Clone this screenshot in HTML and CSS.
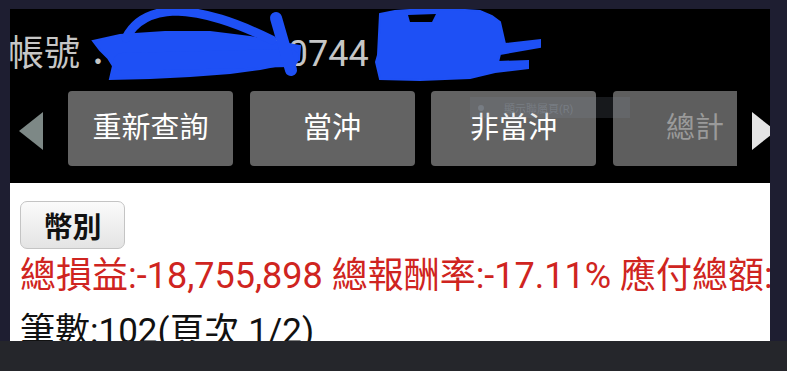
FILE: index.html
```html
<!DOCTYPE html>
<html lang="zh-Hant">
<head>
    <meta charset="UTF-8">
    <meta name="viewport" content="width=device-width, initial-scale=1.0">
    <title>帳號查詢</title>
    <link rel="stylesheet" href="styles.css">
</head>
<body>
    <div class="frame">
        <div class="screen">
            <div class="header">
                <div class="account">帳號：98-0012300744 王大明</div>

                <!-- hand scribbles hiding the account number -->
                <svg class="scribble" width="760" height="90" viewBox="10 9 760 90">
                    <polygon points="93,41 120,35 165,32 210,32 250,37 300,46 299,60 285,64 260,69 230,73 190,76 150,78 110,79 113,66 108,58 100,50" />
                    <path d="M122 62 L290 58" fill="none" stroke-width="18" stroke-linecap="round" />
                    <path d="M126 38 C134 22 150 12 175 11 C205 12 235 22 272 40" fill="none" stroke-width="9" stroke-linecap="round" />
                    <path d="M276 18 L291 70" fill="none" stroke-width="12" stroke-linecap="round" />
                    <polygon points="380,14 395,11 410,10 450,9 480,11 492,16 500,22 505,44 540,40 540,47 500,54 498,62 528,61 528,68 495,72 470,78 420,80 380,79 376,62 378,55" />
                    <polygon class="hole" points="408,15 436,14 432,22 410,22" />
                </svg>

                <div class="tabs">
                    <div class="arrow-left"></div>
                    <div class="tab-viewport">
                        <div class="tab-strip">
                            <div class="tab">重新查詢</div>
                            <div class="tab">當沖</div>
                            <div class="tab">非當沖</div>
                            <div class="tab tab-dim">總計</div>
                        </div>
                    </div>
                    <div class="arrow-right"></div>
                </div>

                <div class="tooltip"><span class="tooltip-icon"></span>顯示聯屬頁(R)</div>
            </div>

            <div class="content">
                <button class="currency" type="button">幣別</button>
                <div class="summary">總損益:-18,755,898 總報酬率:-17.11% 應付總額:-12,345</div>
                <div class="count">筆數:102(頁次 1/2)</div>
            </div>
        </div>
    </div>
    <div class="bottom-bar"></div>
</body>
</html>
```

FILE: styles.css
```css
body {
    margin: 0;
    background-color: #1e1e31;
    font-family: Roboto, "Noto Sans CJK TC", sans-serif;
}
.frame {
    padding: 9px 17px 0 10px;
}
.screen {
    width: 760px;
    height: 332px;
    overflow: hidden;
    background-color: #ffffff;
}
.header {
    position: relative;
    background-color: #000000;
    height: 174px;
}
.account {
    height: 82px;
    box-sizing: border-box;
    padding-top: 8px;
    line-height: 74px;
    margin-left: -2px;
    font-size: 36px;
    color: #c6c6c6;
    white-space: nowrap;
    overflow: hidden;
}
.scribble {
    position: absolute;
    left: 0;
    top: 0;
    fill: #1e50f5;
    stroke: #1e50f5;
    stroke-width: 2;
}
.scribble .hole {
    fill: #000000;
    stroke: none;
}
.tabs {
    display: flex;
    align-items: center;
    height: 75px;
}
.arrow-left {
    width: 0;
    height: 0;
    margin: 5px 25px 0 9px;
    border-top: 19px solid transparent;
    border-bottom: 19px solid transparent;
    border-right: 24px solid #7d8886;
}
.tab-viewport {
    width: 669px;
    height: 75px;
    overflow: hidden;
    flex-shrink: 0;
}
.tab-strip {
    display: flex;
    gap: 16.5px;
}
.tab {
    flex-shrink: 0;
    width: 165px;
    height: 75px;
    line-height: 75px;
    text-align: center;
    font-size: 29px;
    color: #ffffff;
    background-color: #636363;
    border-radius: 4px;
}
.tab-dim {
    color: #9a9a9a;
    background-color: #5e5e5e;
}
.arrow-right {
    width: 0;
    height: 0;
    margin: 5px 0 0 15px;
    border-top: 19px solid transparent;
    border-bottom: 19px solid transparent;
    border-left: 24px solid #e4e4e4;
}
.tooltip {
    position: absolute;
    left: 460px;
    top: 88px;
    width: 160px;
    height: 21px;
    display: flex;
    align-items: center;
    gap: 20px;
    padding-left: 8px;
    box-sizing: border-box;
    font-size: 11px;
    color: rgba(150, 160, 175, 0.35);
    background-color: rgba(130, 140, 155, 0.18);
}
.tooltip-icon {
    width: 6px;
    height: 6px;
    border-radius: 3px;
    background-color: rgba(150, 160, 175, 0.35);
}
.content {
    padding: 18px 0 0 10px;
    white-space: nowrap;
}
.currency {
    display: block;
    width: 105px;
    height: 48px;
    padding: 0;
    font-family: Roboto, "Noto Sans CJK TC", sans-serif;
    font-size: 29px;
    font-weight: bold;
    color: #111111;
    background: linear-gradient(#fbfbfb, #e4e4e4);
    border: 1px solid #c4c4c4;
    border-radius: 7px;
}
.summary {
    font-size: 36px;
    line-height: 55px;
    color: #cf2420;
}
.count {
    font-size: 35px;
    line-height: 55px;
    color: #111111;
}
.bottom-bar {
    height: 30px;
    background-color: #25262b;
}
```
